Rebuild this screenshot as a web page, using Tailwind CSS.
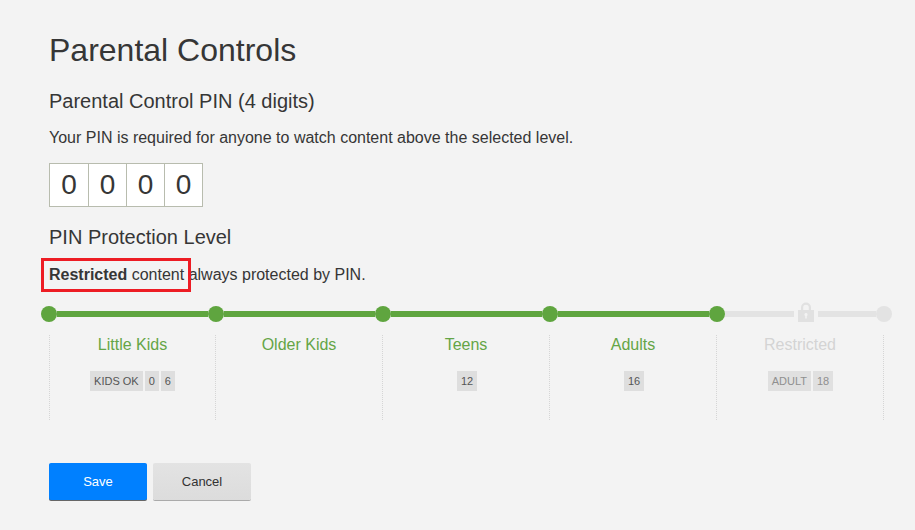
<!DOCTYPE html>
<html lang="en">
<head>
    <meta charset="UTF-8">
    <title>Parental Controls</title>
    <script src="https://cdn.jsdelivr.net/npm/@tailwindcss/browser@4"></script>
</head>
<body class="bg-[#f3f3f3] h-[530px] w-[915px] overflow-hidden font-['Liberation_Sans',Arial,sans-serif] text-[#363636]">
    <div class="pl-[49px] pt-[31px]">
        <h1 class="text-[32px] leading-[38px]">Parental Controls</h1>

        <h2 class="mt-[19px] text-[20px] leading-[26px]">Parental Control PIN (4 digits)</h2>
        <p class="mt-[12px] text-[16px] leading-[24px]">Your PIN is required for anyone to watch content above the selected level.</p>

        <div class="mt-[13px] flex w-[154px] h-[44px] border border-[#b8bcae] bg-white text-[28px] text-center leading-[42px]">
            <div class="w-[39px] border-r border-[#b8bcae]">0</div>
            <div class="w-[38px] border-r border-[#b8bcae]">0</div>
            <div class="w-[38px] border-r border-[#b8bcae]">0</div>
            <div class="flex-1">0</div>
        </div>

        <h2 class="mt-[17px] text-[20px] leading-[26px]">PIN Protection Level</h2>
        <p class="relative mt-[13px] text-[16px] leading-[24px]">
            <b>Restricted</b> content always protected by PIN.
            <span class="absolute left-[-8px] top-[-5px] w-[150px] h-[34px] border-[3px] border-[#ed1c24]"></span>
        </p>

        <!-- slider track -->
        <div class="mt-[16px] -ml-[8px] flex items-center h-[22px] w-[851px]">
            <span class="w-4 h-4 rounded-full bg-[#5fa53f] shrink-0"></span>
            <span class="w-[151px] h-[6px] bg-[#5fa53f] shrink-0"></span>
            <span class="w-4 h-4 rounded-full bg-[#5fa53f] shrink-0"></span>
            <span class="w-[151px] h-[6px] bg-[#5fa53f] shrink-0"></span>
            <span class="w-4 h-4 rounded-full bg-[#5fa53f] shrink-0"></span>
            <span class="w-[151px] h-[6px] bg-[#5fa53f] shrink-0"></span>
            <span class="w-4 h-4 rounded-full bg-[#5fa53f] shrink-0"></span>
            <span class="w-[151px] h-[6px] bg-[#5fa53f] shrink-0"></span>
            <span class="w-4 h-4 rounded-full bg-[#5fa53f] shrink-0"></span>
            <span class="w-[69px] h-[6px] bg-[#e3e3e3] shrink-0"></span>
            <span class="w-[24px] flex justify-center shrink-0 -mt-1">
                <svg width="16" height="20" viewBox="0 0 16 20">
                    <path fill="#e1e1e1" fill-rule="evenodd" d="M3 8V5.5a5 5 0 0 1 10 0V8h3v12H0V8zM5.2 8h5.6V5.5a2.8 2.8 0 0 0-5.6 0zM8 11a1.6 1.6 0 0 0-.8 3v2.5h1.6V14A1.6 1.6 0 0 0 8 11z"/>
                </svg>
            </span>
            <span class="w-[58px] h-[6px] bg-[#e3e3e3] shrink-0"></span>
            <span class="w-4 h-4 rounded-full bg-[#e3e3e3] shrink-0"></span>
        </div>

        <!-- levels -->
        <div class="mt-[10px] flex h-[85px] w-[835px] border-r border-dotted border-[#d5d5d5]">
            <div class="w-[166px] border-l border-dotted border-[#d5d5d5] text-center">
                <div class="text-[16px] leading-[20px] text-[#64a546]">Little Kids</div>
                <div class="mt-[16px] flex justify-center gap-[2px] text-[11px] leading-[20px] text-[#555]">
                    <span class="bg-[#dedede] px-[4px]">KIDS OK</span>
                    <span class="bg-[#dedede] px-[4px]">0</span>
                    <span class="bg-[#dedede] px-[4px]">6</span>
                </div>
            </div>
            <div class="w-[167px] border-l border-dotted border-[#d5d5d5] text-center">
                <div class="text-[16px] leading-[20px] text-[#64a546]">Older Kids</div>
            </div>
            <div class="w-[167px] border-l border-dotted border-[#d5d5d5] text-center">
                <div class="text-[16px] leading-[20px] text-[#64a546]">Teens</div>
                <div class="mt-[16px] pl-[2px] flex justify-center gap-[2px] text-[11px] leading-[20px] text-[#555]">
                    <span class="bg-[#dedede] px-[4px]">12</span>
                </div>
            </div>
            <div class="w-[167px] border-l border-dotted border-[#d5d5d5] text-center">
                <div class="text-[16px] leading-[20px] text-[#64a546]">Adults</div>
                <div class="mt-[16px] pl-[2px] flex justify-center gap-[2px] text-[11px] leading-[20px] text-[#555]">
                    <span class="bg-[#dedede] px-[4px]">16</span>
                </div>
            </div>
            <div class="w-[167px] border-l border-dotted border-[#d5d5d5] text-center">
                <div class="text-[16px] leading-[20px] text-[#d4d4d4]">Restricted</div>
                <div class="mt-[16px] pl-px flex justify-center gap-[2px] text-[11px] leading-[20px] text-[#8f8f8f]">
                    <span class="bg-[#e0e0e0] px-[4px]">ADULT</span>
                    <span class="bg-[#e0e0e0] px-[4px]">18</span>
                </div>
            </div>
        </div>

        <div class="mt-[43px] flex gap-[6px] text-[13px]">
            <button class="w-[98px] h-[37px] bg-[#0080ff] text-white rounded-[2px] shadow-[0_1px_0_#666]">Save</button>
            <button class="w-[98px] h-[37px] bg-linear-to-b from-[#e3e3e3] to-[#dcdcdc] text-[#333] rounded-[2px] shadow-[0_1px_0_#aaa]">Cancel</button>
        </div>
    </div>
</body>
</html>
